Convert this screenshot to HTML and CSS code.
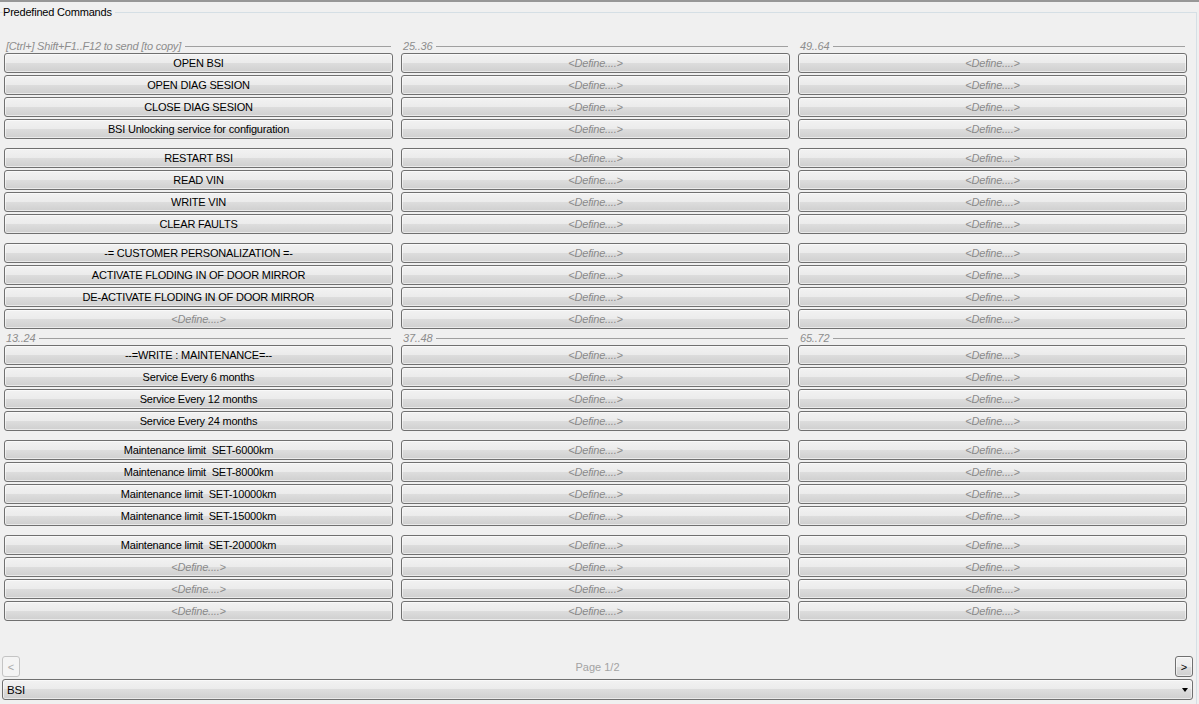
FILE: index.html
```html
<!DOCTYPE html>
<html>
  <head>
    <title>Predefined Commands</title>
    <meta charset="utf-8"/>
    <link rel="stylesheet" href="styles.css">
  </head>
  <body>
    <div class="window">
      <fieldset class="group">
        <legend>Predefined Commands</legend>
        <div class="group-body">

          <div class="section">
            <div class="col">
              <div class="col-head"><span>[Ctrl+] Shift+F1..F12 to send [to copy]</span></div>
              <div class="block">
                <button class="cmd">OPEN BSI</button>
                <button class="cmd">OPEN DIAG SESION</button>
                <button class="cmd">CLOSE DIAG SESION</button>
                <button class="cmd">BSI Unlocking service for configuration</button>
              </div>
              <div class="block">
                <button class="cmd">RESTART BSI</button>
                <button class="cmd">READ VIN</button>
                <button class="cmd">WRITE VIN</button>
                <button class="cmd">CLEAR FAULTS</button>
              </div>
              <div class="block">
                <button class="cmd">-= CUSTOMER PERSONALIZATION =-</button>
                <button class="cmd">ACTIVATE FLODING IN OF DOOR MIRROR</button>
                <button class="cmd">DE-ACTIVATE FLODING IN OF DOOR MIRROR</button>
                <button class="cmd empty">&lt;Define....&gt;</button>
              </div>
            </div>
            <div class="col">
              <div class="col-head"><span>25..36</span></div>
              <div class="block">
                <button class="cmd empty">&lt;Define....&gt;</button>
                <button class="cmd empty">&lt;Define....&gt;</button>
                <button class="cmd empty">&lt;Define....&gt;</button>
                <button class="cmd empty">&lt;Define....&gt;</button>
              </div>
              <div class="block">
                <button class="cmd empty">&lt;Define....&gt;</button>
                <button class="cmd empty">&lt;Define....&gt;</button>
                <button class="cmd empty">&lt;Define....&gt;</button>
                <button class="cmd empty">&lt;Define....&gt;</button>
              </div>
              <div class="block">
                <button class="cmd empty">&lt;Define....&gt;</button>
                <button class="cmd empty">&lt;Define....&gt;</button>
                <button class="cmd empty">&lt;Define....&gt;</button>
                <button class="cmd empty">&lt;Define....&gt;</button>
              </div>
            </div>
            <div class="col">
              <div class="col-head"><span>49..64</span></div>
              <div class="block">
                <button class="cmd empty">&lt;Define....&gt;</button>
                <button class="cmd empty">&lt;Define....&gt;</button>
                <button class="cmd empty">&lt;Define....&gt;</button>
                <button class="cmd empty">&lt;Define....&gt;</button>
              </div>
              <div class="block">
                <button class="cmd empty">&lt;Define....&gt;</button>
                <button class="cmd empty">&lt;Define....&gt;</button>
                <button class="cmd empty">&lt;Define....&gt;</button>
                <button class="cmd empty">&lt;Define....&gt;</button>
              </div>
              <div class="block">
                <button class="cmd empty">&lt;Define....&gt;</button>
                <button class="cmd empty">&lt;Define....&gt;</button>
                <button class="cmd empty">&lt;Define....&gt;</button>
                <button class="cmd empty">&lt;Define....&gt;</button>
              </div>
            </div>
          </div>

          <div class="section">
            <div class="col">
              <div class="col-head"><span>13..24</span></div>
              <div class="block">
                <button class="cmd">--=WRITE : MAINTENANCE=--</button>
                <button class="cmd">Service Every 6 months</button>
                <button class="cmd">Service Every 12 months</button>
                <button class="cmd">Service Every 24 months</button>
              </div>
              <div class="block">
                <button class="cmd">Maintenance limit&nbsp; SET-6000km</button>
                <button class="cmd">Maintenance limit&nbsp; SET-8000km</button>
                <button class="cmd">Maintenance limit&nbsp; SET-10000km</button>
                <button class="cmd">Maintenance limit&nbsp; SET-15000km</button>
              </div>
              <div class="block">
                <button class="cmd">Maintenance limit&nbsp; SET-20000km</button>
                <button class="cmd empty">&lt;Define....&gt;</button>
                <button class="cmd empty">&lt;Define....&gt;</button>
                <button class="cmd empty">&lt;Define....&gt;</button>
              </div>
            </div>
            <div class="col">
              <div class="col-head"><span>37..48</span></div>
              <div class="block">
                <button class="cmd empty">&lt;Define....&gt;</button>
                <button class="cmd empty">&lt;Define....&gt;</button>
                <button class="cmd empty">&lt;Define....&gt;</button>
                <button class="cmd empty">&lt;Define....&gt;</button>
              </div>
              <div class="block">
                <button class="cmd empty">&lt;Define....&gt;</button>
                <button class="cmd empty">&lt;Define....&gt;</button>
                <button class="cmd empty">&lt;Define....&gt;</button>
                <button class="cmd empty">&lt;Define....&gt;</button>
              </div>
              <div class="block">
                <button class="cmd empty">&lt;Define....&gt;</button>
                <button class="cmd empty">&lt;Define....&gt;</button>
                <button class="cmd empty">&lt;Define....&gt;</button>
                <button class="cmd empty">&lt;Define....&gt;</button>
              </div>
            </div>
            <div class="col">
              <div class="col-head"><span>65..72</span></div>
              <div class="block">
                <button class="cmd empty">&lt;Define....&gt;</button>
                <button class="cmd empty">&lt;Define....&gt;</button>
                <button class="cmd empty">&lt;Define....&gt;</button>
                <button class="cmd empty">&lt;Define....&gt;</button>
              </div>
              <div class="block">
                <button class="cmd empty">&lt;Define....&gt;</button>
                <button class="cmd empty">&lt;Define....&gt;</button>
                <button class="cmd empty">&lt;Define....&gt;</button>
                <button class="cmd empty">&lt;Define....&gt;</button>
              </div>
              <div class="block">
                <button class="cmd empty">&lt;Define....&gt;</button>
                <button class="cmd empty">&lt;Define....&gt;</button>
                <button class="cmd empty">&lt;Define....&gt;</button>
                <button class="cmd empty">&lt;Define....&gt;</button>
              </div>
            </div>
          </div>

          <div class="pager">
            <button class="nav" disabled>&lt;</button>
            <span class="page">Page 1/2</span>
            <button class="nav">&gt;</button>
          </div>

          <div class="combo">
            <span>BSI</span>
            <span class="arrow"></span>
          </div>
        </div>
      </fieldset>
    </div>
  </body>
</html>
```

FILE: styles.css
```css
html, body {
  margin: 0;
  padding: 0;
}
body {
  background: #f0f0f0;
  color: #000;
  font-family: "Liberation Sans", Arial, sans-serif;
  font-size: 11px;
  letter-spacing: -0.2px;
  overflow: hidden;
}
button, div, fieldset {
  box-sizing: border-box;
}
.window {
  border-top: 2px solid #979797;
  height: 704px;
  display: flex;
  flex-direction: column;
}

/* group box around the whole command panel */
.group {
  border: none;
  border-top: 1px solid #d5dfe5;
  border-right: 1px solid #d5dfe5;
  flex: 1;
  margin: 4px 0 0 0;
  min-width: 0;
  padding: 0;
  width: 1197px;
}
.group legend {
  line-height: 13px;
  margin-left: 3px;
  padding: 0 3px 0 0;
}
.group-body {
  display: flex;
  flex-direction: column;
  height: 100%;
}

/* three columns of command buttons */
.section {
  display: grid;
  grid-template-columns: repeat(3, 389px);
  column-gap: 8px;
  padding-left: 4px;
}
.section:first-child {
  margin-top: 20px;
}
.col {
  display: flex;
  flex-direction: column;
}
.col-head {
  align-items: center;
  color: #8d8d8d;
  display: flex;
  font-style: italic;
  height: 14px;
  padding: 0 2px;
  white-space: nowrap;
}
.col-head::after {
  background: #a0a0a0;
  content: "";
  flex: 1;
  height: 1px;
  margin-left: 4px;
}
.block + .block {
  margin-top: 7px;
}

.cmd {
  align-items: center;
  background: linear-gradient(#f2f2f2 0%, #ebebeb 50%, #dddddd 50%, #cfcfcf 100%);
  border: 1px solid #707070;
  border-radius: 3px;
  box-shadow: inset 0 0 0 1px rgba(255, 255, 255, 0.55);
  color: #000;
  display: flex;
  font-family: inherit;
  font-size: 11px;
  height: 20px;
  justify-content: center;
  letter-spacing: -0.2px;
  margin: 0 0 2px 0;
  padding: 0;
  white-space: nowrap;
  width: 100%;
}
.cmd.empty {
  color: #8a8a8a;
  font-style: italic;
}

/* paging row and device selector at the bottom */
.pager {
  align-items: center;
  display: flex;
  height: 21px;
  justify-content: space-between;
  margin: auto 0 2px 2px;
  width: 1191px;
}
.nav {
  background: linear-gradient(#f2f2f2 0%, #ebebeb 50%, #dddddd 50%, #cfcfcf 100%);
  border: 1px solid #707070;
  border-radius: 3px;
  box-shadow: inset 0 0 0 1px rgba(255, 255, 255, 0.55);
  color: #000;
  font-family: inherit;
  font-size: 11px;
  height: 21px;
  padding: 0;
  width: 18px;
}
.nav:disabled {
  background: #f4f4f4;
  border-color: #c4c4c4;
  box-shadow: none;
  color: #a8a8a8;
}
.page {
  color: #a3a3a3;
  letter-spacing: 0;
}
.combo {
  align-items: center;
  background: linear-gradient(#f2f2f2 0%, #ebebeb 50%, #dddddd 50%, #cfcfcf 100%);
  border: 1px solid #707070;
  border-radius: 3px;
  box-shadow: inset 0 0 0 1px rgba(255, 255, 255, 0.55);
  display: flex;
  font-size: 11.5px;
  height: 21px;
  justify-content: space-between;
  margin: 0 0 4px 2px;
  padding: 0 4px 0 4px;
  width: 1191px;
}
.arrow {
  border-left: 3.5px solid transparent;
  border-right: 3.5px solid transparent;
  border-top: 4px solid #000;
  height: 0;
  width: 0;
}
```
